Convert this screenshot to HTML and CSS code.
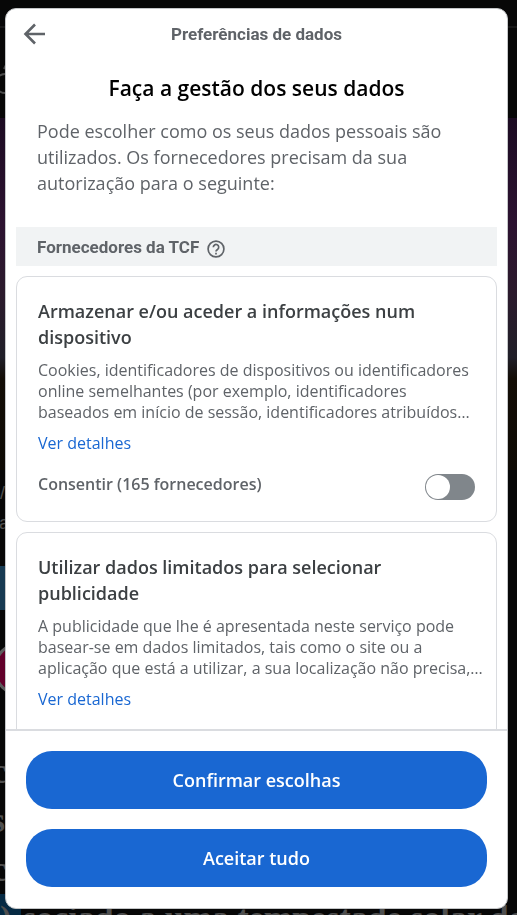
FILE: index.html
```html
<!DOCTYPE html>
<html lang="pt">
<head>
<meta charset="utf-8">
<meta name="viewport" content="width=device-width, initial-scale=1">
<title>Preferências de dados</title>
<link rel="stylesheet" href="styles.css">
</head>
<body>
<div class="page" aria-hidden="true">
  <div class="masthead">
    <svg width="14" height="40" viewBox="0 0 14 40" fill="none" stroke="#4b4b4b" stroke-width="2"><path d="M5 14A9 9 0 0 0 5 33M4 9l3-6"/></svg>
  </div>
  <div class="hero"></div>
  <div class="story">
    <p class="meta">/</p>
    <p class="meta meta-label">Fa</p>
    <div class="share"></div>
    <svg class="avatar" width="40" height="60" viewBox="0 0 40 60"><circle cx="25" cy="30" r="26" fill="#62002a" stroke="#5c5c5c" stroke-width="3"/></svg>
    <p class="headline">c<br>s<br>c</p>
    <div class="lead"><span class="badge">)</span><span>sociado a uma tempestade solar de</span></div>
  </div>
</div>

<section class="dialog" role="dialog" aria-labelledby="dialog-title">
  <header class="bar">
    <button class="back" type="button" aria-label="Voltar">
      <svg width="24" height="24" viewBox="0 0 24 24" fill="none" stroke="#5f6368" stroke-width="2.600"><path d="M23 12H4M13 2.500L3.500 12l9.500 9.500"/></svg>
    </button>
    <h2 class="bar-title" id="dialog-title">Preferências de dados</h2>
  </header>
  <main class="content">
    <h1 class="heading">Faça a gestão dos seus dados</h1>
    <p class="intro">Pode escolher como os seus dados pessoais são utilizados. Os fornecedores precisam da sua autorização para o seguinte:</p>
    <div class="group">
      <h2 class="group-title">Fornecedores da TCF</h2>
      <button class="help" type="button" aria-label="Ajuda">
        <svg width="18" height="18" viewBox="0 0 18 18" fill="none" stroke="#5f6368" stroke-width="1.7"><circle cx="9" cy="9" r="7.900"/><path d="M6.300 7.200a2.700 2.700 0 1 1 4.400 2.100C9.700 10 9 10.400 9 11.500M9 12.700v1.700"/></svg>
      </button>
    </div>
    <article class="card">
      <h3 class="card-title">Armazenar e/ou aceder a informações num dispositivo</h3>
      <p class="desc">Cookies, identificadores de dispositivos ou identificadores online semelhantes (por exemplo, identificadores<br>baseados em início de sessão, identificadores atribuídos…</p>
      <a class="details" href="#">Ver detalhes</a>
      <div class="consent">
        <label for="consent-1">Consentir (165 fornecedores)</label>
        <input class="switch" id="consent-1" type="checkbox" role="switch">
      </div>
    </article>
    <article class="card">
      <h3 class="card-title">Utilizar dados limitados para selecionar publicidade</h3>
      <p class="desc">A publicidade que lhe é apresentada neste serviço pode<br>basear-se em dados limitados, tais como o site ou a<br>aplicação que está a utilizar, a sua localização não precisa,…</p>
      <a class="details" href="#">Ver detalhes</a>
      <div class="consent"></div>
    </article>
  </main>
  <footer class="actions">
    <button class="action" type="button">Confirmar escolhas</button>
    <button class="action" type="button">Aceitar tudo</button>
  </footer>
</section>
</body>
</html>
```

FILE: styles.css
```css
* { box-sizing: border-box; }

body,
h1,
h2,
h3,
p { margin: 0; }

button {
  padding: 0;
  border: 0;
  background: none;
  font: inherit;
  cursor: pointer;
}

body {
  height: 100vh;
  overflow: hidden;
  background: #070707;
  color: #5f6368;
  font-family: "Open Sans", sans-serif;
}

svg { display: block; }

/* Dimmed article behind the dialog */
.page {
  height: 100vh;
  overflow: hidden;
  color: #4f4f4f;
  font-family: "Liberation Serif", serif;
}

.masthead {
  height: 118px;
  padding-top: 32px;
  background: linear-gradient(#070707 26px, #171717 26px, #171717 28px, #070707 28px);
}

.masthead svg { margin-top: 28px; }

.hero {
  height: 352px;
  background: linear-gradient(#1c0b22, #2c1230 30%, #2b1a2c 50%, #201f28 68%, #130d06 74%, #0e0a04);
}

.story { padding-top: 8px; }

.meta {
  font: 18px/30px "Liberation Sans", sans-serif;
}

.meta-label { margin-left: -12px; }

.share {
  width: 100px;
  height: 44px;
  margin-top: 28px;
  background: #173a52;
}

.avatar { margin: 29px 0 0 -4px; }

.headline {
  margin: 48px 0 0 -9px;
  font-weight: bold;
  font-size: 36px;
  line-height: 49px;
}

.lead {
  display: flex;
  gap: 2px;
  font-weight: bold;
  font-size: 34px;
  line-height: 48px;
  white-space: nowrap;
}

.badge {
  flex: none;
  width: 21px;
  background: #062a43;
}

/* Consent dialog */
.dialog {
  position: fixed;
  inset: 8px 9px 6px 5px;
  display: flex;
  flex-direction: column;
  overflow: hidden;
  border: 1px solid #c4c6c8;
  border-radius: 11px;
  background: #fff;
}

.bar {
  display: grid;
  grid-template-columns: 24px 1fr 24px;
  align-items: center;
  padding: 13px 16px 0;
}

.bar-title,
.group-title {
  font-family: Roboto, sans-serif;
  font-weight: bold;
  font-size: 17px;
  line-height: 24px;
}

.bar-title { text-align: center; }

.content {
  flex: 1;
  min-height: 0;
  overflow: hidden;
  padding: 26px 10px 0;
}

.heading {
  color: #000;
  font-weight: 600;
  font-size: 21px;
  line-height: 32px;
  text-align: center;
}

.intro {
  padding: 14px 21px 0;
  font-size: 18px;
  line-height: 26px;
}

.group {
  display: flex;
  gap: 8px;
  height: 39px;
  margin-top: 31px;
  padding: 8px 21px 0;
  background: #f1f3f4;
}

.help {
  height: 18px;
  margin-top: 5px;
}

.card {
  margin-top: 10px;
  padding: 21px 10px 21px 21px;
  border: 1px solid #dadce0;
  border-radius: 11px;
}

.card-title {
  color: #3c4043;
  font-weight: 600;
  font-size: 18px;
  line-height: 26px;
}

.desc {
  padding-top: 10px;
  font-size: 16px;
  line-height: 21px;
}

.details {
  display: block;
  width: fit-content;
  margin-top: 10px;
  color: #1967d2;
  font-size: 16px;
  line-height: 21px;
  text-decoration: none;
}

.consent {
  display: flex;
  justify-content: space-between;
  min-height: 26px;
  margin-top: 20px;
  padding-right: 11px;
  font-weight: 600;
  font-size: 16px;
  line-height: 21px;
}

.switch {
  appearance: none;
  display: flex;
  width: 50px;
  height: 26px;
  margin: 0;
  padding: 1px;
  border-radius: 13px;
  background: #80868b;
}

.switch::before {
  content: "";
  width: 24px;
  height: 24px;
  border-radius: 50%;
  background: #fff;
}

.switch:checked { justify-content: flex-end; background: #1967d2; }

.actions {
  display: flex;
  flex-direction: column;
  gap: 20px;
  padding: 20px 20px 21px;
  border-top: 2px solid #dadce0;
}

.action {
  height: 58px;
  border-radius: 26px;
  background: #1967d2;
  color: #fff;
  font-weight: 600;
  font-size: 18px;
}
```
